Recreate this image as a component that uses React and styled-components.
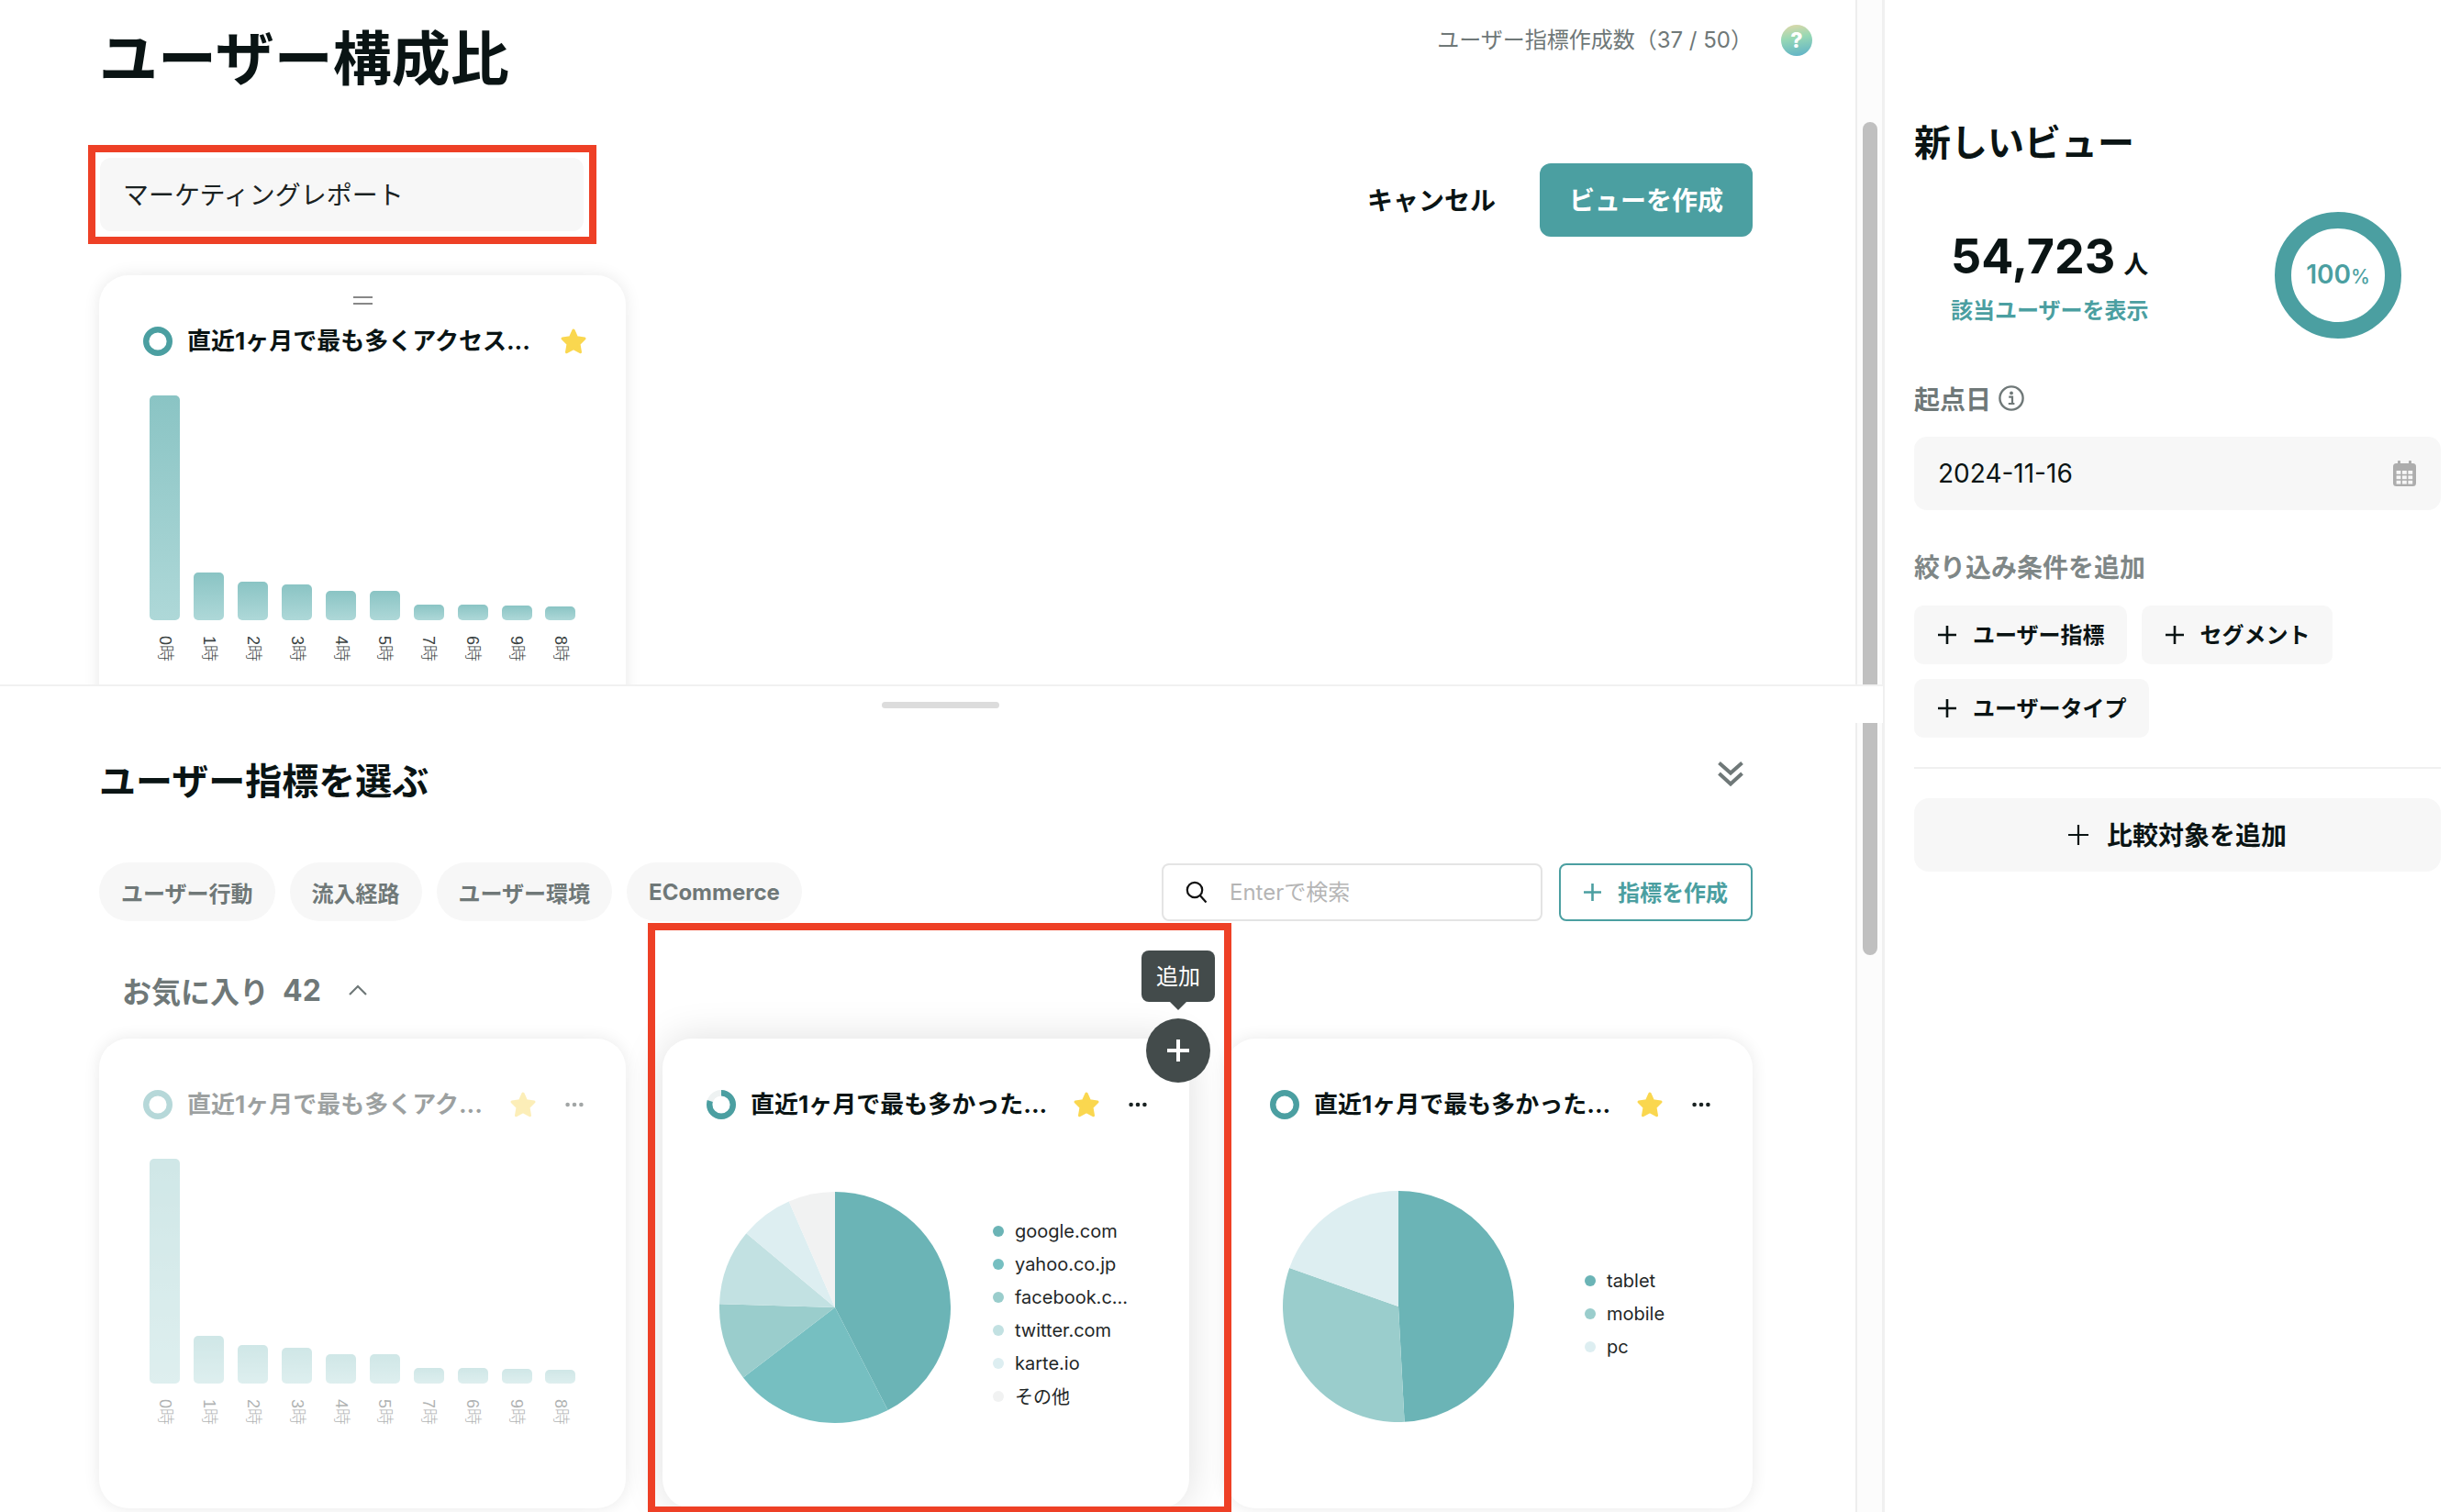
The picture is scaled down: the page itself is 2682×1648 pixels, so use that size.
import React from "react";
import styled, { createGlobalStyle } from "styled-components";

const TEAL = "#4b9fa1";
const INK = "#0a1414";
const GREY = "#6f7878";

const Global = createGlobalStyle`
  html, body { margin: 0; padding: 0; background: #fff; }
  * { box-sizing: border-box; }
  body { font-family: "Inter", "Noto Sans CJK JP", sans-serif; color: ${INK}; }
`;

const Page = styled.div`
  display: flex;
  width: 2682px;
  height: 1648px;
  overflow: hidden;
  background: #fff;
`;
const LeftColumn = styled.div`
  width: 2052px;
  flex: none;
  display: flex;
  flex-direction: column;
`;
const TopPane = styled.div`
  height: 748px;
  flex: none;
  display: flex;
  border-bottom: 2px solid #f1f1f1;
`;
const TopContent = styled.div`
  width: 2022px;
  flex: none;
  overflow: hidden;
  padding: 32px 112px 0 108px;
`;
const Rail = styled.div`
  width: 30px;
  flex: none;
  padding: ${(p) => p.$top}px 5px 0 6px;
  border-left: 2px solid #eeeeee;
  border-right: 1px solid #f0f0f0;
  background: #fcfcfc;
`;
const Thumb = styled.div`
  width: 16px;
  height: ${(p) => p.$h}px;
  background: #c0c0c0;
  border-radius: ${(p) => p.$radius};
`;
const HeaderRow = styled.div`
  display: flex;
  justify-content: space-between;
  align-items: flex-start;
  margin-right: -65px;
`;
const PageTitle = styled.h1`
  margin: 0;
  font-size: 64px;
  line-height: 64px;
  font-weight: 700;
`;
const Quota = styled.div`
  display: flex;
  align-items: center;
  gap: 31px;
  margin-top: -5px;
  font-size: 24px;
  line-height: 34px;
  color: ${GREY};
`;
const HelpBadge = styled.div`
  width: 34px;
  height: 34px;
  border-radius: 50%;
  display: flex;
  align-items: center;
  justify-content: center;
  background: linear-gradient(170deg, #e3d8a8 0%, #97d8b4 42%, #5cb0c9 100%);
  color: #fff;
  font-size: 23px;
  font-weight: 800;
`;
const FormRow = styled.div`
  display: flex;
  justify-content: space-between;
  align-items: flex-start;
  margin: 62px 0 0 -12px;
`;
const Highlight = styled.div`
  width: 554px;
  height: 108px;
  border: 8px solid #ee4026;
  padding: 6px 6px 6px 5px;
`;
const NameInput = styled.div`
  height: 80px;
  border-radius: 12px;
  background: #f7f7f7;
  padding: 0 0 3px 25px;
  display: flex;
  align-items: center;
  font-size: 28px;
  color: #1a2222;
`;
const FormActions = styled.div`
  display: flex;
  align-items: center;
  gap: 48px;
  margin-top: 20px;
`;
const CancelText = styled.div`
  font-size: 28px;
  font-weight: 700;
  padding-bottom: 3px;
`;
const PrimaryButton = styled.div`
  width: 232px;
  height: 80px;
  border-radius: 12px;
  background: ${TEAL};
  color: #fff;
  font-size: 28px;
  font-weight: 700;
  padding-bottom: 3px;
  display: flex;
  align-items: center;
  justify-content: center;
`;
const TopCardSlot = styled.div`
  margin-top: 34px;
`;

const BottomPane = styled.div`
  flex: 1;
  min-height: 0;
  display: flex;
  flex-direction: column;
`;
const HandleBand = styled.div`
  height: 40px;
  flex: none;
  padding-right: 3px;
  display: flex;
  align-items: center;
  justify-content: center;
`;
const PaneHandle = styled.div`
  width: 128px;
  height: 7px;
  border-radius: 4px;
  background: #dcdcdc;
`;
const BottomBody = styled.div`
  flex: 1;
  min-height: 0;
  display: flex;
`;
const BottomContent = styled.div`
  width: 2022px;
  flex: none;
  padding: 40px 112px 0 108px;
`;
const SectionHead = styled.div`
  height: 48px;
  display: flex;
  align-items: center;
  justify-content: space-between;
`;
const SectionTitle = styled.h2`
  margin: 0;
  font-size: 40px;
  line-height: 48px;
  font-weight: 700;
`;
const CollapseSlot = styled.span`
  display: flex;
  margin: 0 10px 17px 0;
`;
const Toolbar = styled.div`
  display: flex;
  align-items: center;
  margin-top: 64px;
  height: 64px;
`;
const Tabs = styled.div`
  display: flex;
  gap: 16px;
  flex: 1;
`;
const Tab = styled.div`
  height: 64px;
  padding: 0 24px;
  border-radius: 32px;
  background: #f7f7f7;
  color: ${GREY};
  font-size: 24px;
  font-weight: 700;
  display: flex;
  align-items: center;
`;
const SearchBox = styled.div`
  width: 415px;
  height: 63px;
  border: 2px solid #e4e4e4;
  border-radius: 8px;
  display: flex;
  align-items: center;
  gap: 24px;
  padding: 0 0 0 24px;
  font-size: 24px;
  color: #b5b5b5;
`;
const Placeholder = styled.span`
  padding-bottom: 3px;
`;
const OutlineButton = styled.div`
  width: 211px;
  height: 63px;
  margin-left: 18px;
  border: 2px solid ${TEAL};
  border-radius: 8px;
  color: ${TEAL};
  font-size: 24px;
  font-weight: 700;
  display: flex;
  align-items: center;
  justify-content: center;
  gap: 18px;
`;
const OutlineLabel = styled.span`
  padding-bottom: 2px;
`;
const FavRow = styled.div`
  height: 40px;
  margin-top: 56px;
  padding: 0 0 2px 25px;
  display: flex;
  align-items: center;
  color: ${GREY};
  font-size: 32px;
  font-weight: 700;
`;
const FavCount = styled.span`
  margin-left: 15px;
`;
const FavChevron = styled.span`
  margin-left: 30px;
  display: flex;
`;
const CardGrid = styled.div`
  position: relative;
  display: grid;
  grid-template-columns: repeat(3, 574px);
  gap: 40px;
  margin-top: 32px;
`;
const Card = styled.div`
  position: relative;
  display: flow-root;
  width: 574px;
  height: 512px;
  border-radius: 32px;
  background: #fff;
  box-shadow: ${(p) =>
    p.$lifted ? "0 0 44px rgba(0, 0, 0, 0.13)" : "0 0 18px rgba(0, 0, 0, 0.09)"};
`;
const CardBody = styled.div`
  opacity: ${(p) => (p.$faded ? 0.4 : 1)};
`;
const DragHandle = styled.div`
  width: 21px;
  height: 9px;
  margin: 23px auto 24px;
  border-top: 2px solid #888;
  border-bottom: 2px solid #888;
`;
const CardHeader = styled.div`
  height: 32px;
  display: flex;
  align-items: center;
  padding: 0 ${(p) => (p.$pinned ? 42 : 46)}px 0 48px;
  margin-top: ${(p) => (p.$pinned ? 0 : 56)}px;
`;
const CardTitle = styled.div`
  flex: 1;
  min-width: 0;
  margin-left: 16px;
  font-size: 26px;
  font-weight: 700;
  line-height: 32px;
  white-space: nowrap;
`;
const StarSlot = styled.span`
  display: flex;
  flex: none;
  margin-left: 15px;
`;
const MoreSlot = styled.span`
  display: flex;
  flex: none;
  margin-left: 31px;
`;
const BarChart = styled.div`
  display: grid;
  grid-template-columns: repeat(10, 47.9px);
  margin: 0 0 0 48px;
  height: 288px;
  align-items: end;
  justify-items: center;
`;
const Bar = styled.div`
  width: 33px;
  border-radius: 5px;
  background: linear-gradient(#8ac4c4, #aed8d8);
`;
const BarLabels = styled.div`
  display: grid;
  grid-template-columns: repeat(10, 47.9px);
  margin: 17px 0 0 48px;
  justify-items: center;
`;
const BarLabel = styled.div`
  transform: rotate(90deg);
  width: 18px;
  height: 28px;
  display: flex;
  align-items: center;
  justify-content: center;
  white-space: nowrap;
  font-family: "Liberation Sans", "Noto Sans CJK JP", sans-serif;
  font-weight: 300;
  font-size: 18px;
  line-height: 18px;
  color: #3a4242;
`;
const PieRow = styled.div`
  display: flex;
  align-items: center;
  margin-top: ${(p) => p.$top}px;
  padding-left: 62px;
`;
const Legend = styled.div`
  display: flex;
  flex-direction: column;
  margin: ${(p) => p.$shift}px 0 0 ${(p) => p.$gap}px;
`;
const LegendItem = styled.div`
  height: 36px;
  display: flex;
  align-items: center;
  gap: 12px;
  font-size: 20px;
  color: #1f2727;
  white-space: nowrap;
`;
const LegendDot = styled.span`
  width: 12px;
  height: 12px;
  border-radius: 50%;
  background: ${(p) => p.$c};
`;
const Tooltip = styled.div`
  position: absolute;
  left: 522px;
  top: -96px;
  width: 80px;
  height: 56px;
  padding-bottom: 4px;
  border-radius: 8px;
  background: #434b4b;
  color: #fff;
  font-size: 24px;
  display: flex;
  align-items: center;
  justify-content: center;
  z-index: 3;
  &::after {
    content: "";
    position: absolute;
    left: 31px;
    bottom: -9px;
    border-left: 9px solid transparent;
    border-right: 9px solid transparent;
    border-top: 9px solid #434b4b;
  }
`;
const AddCircle = styled.div`
  position: absolute;
  left: 527px;
  top: -22px;
  width: 70px;
  height: 70px;
  border-radius: 50%;
  background: #434b4b;
  display: flex;
  align-items: center;
  justify-content: center;
  z-index: 3;
`;
const CardFrame = styled.div`
  position: absolute;
  left: 598px;
  top: -126px;
  width: 636px;
  height: 644px;
  border: 8px solid #ee4026;
  z-index: 2;
  pointer-events: none;
`;

const Sidebar = styled.aside`
  flex: 1;
  border-left: 2px solid #f0f0f0;
  padding: 132px 22px 0 32px;
`;
const SideTitle = styled.h2`
  margin: 0;
  font-size: 40px;
  line-height: 48px;
  font-weight: 700;
`;
const StatsRow = styled.div`
  display: flex;
  justify-content: space-between;
  margin-top: 51px;
  padding: 0 43px 0 40px;
`;
const StatsText = styled.div`
  padding-top: 19px;
`;
const CountLine = styled.div`
  height: 60px;
  display: flex;
  align-items: baseline;
  gap: 9px;
`;
const CountValue = styled.span`
  font-size: 52px;
  line-height: 60px;
  font-weight: 700;
`;
const CountUnit = styled.span`
  font-size: 27px;
  font-weight: 700;
`;
const UsersLink = styled.div`
  margin-top: 13px;
  font-size: 24px;
  line-height: 32px;
  font-weight: 700;
  color: ${TEAL};
`;
const Donut = styled.div`
  width: 138px;
  height: 138px;
  border: 18px solid ${TEAL};
  border-radius: 50%;
  display: flex;
  align-items: baseline;
  justify-content: center;
  padding-top: 33px;
  color: ${TEAL};
  font-size: 28px;
  font-weight: 600;
`;
const DonutUnit = styled.span`
  font-size: 21px;
  font-weight: 500;
`;
const FieldLabel = styled.div`
  height: 40px;
  margin-top: ${(p) => p.$top}px;
  padding-bottom: 3px;
  display: flex;
  align-items: center;
  gap: 8px;
  font-size: 28px;
  font-weight: 700;
  color: ${(p) => p.$c};
`;
const DateField = styled.div`
  height: 80px;
  margin-top: 21px;
  border-radius: 14px;
  background: #f7f7f7;
  padding: 0 27px 0 26px;
  display: flex;
  align-items: center;
  justify-content: space-between;
  font-size: 28px;
`;
const ChipWrap = styled.div`
  display: flex;
  flex-wrap: wrap;
  gap: 16px;
  margin-top: 22px;
`;
const Chip = styled.div`
  height: 64px;
  padding: 0 24px 0 26px;
  border-radius: 10px;
  background: #f7f7f7;
  font-size: 24px;
  font-weight: 700;
  display: flex;
  align-items: center;
  gap: 18px;
`;
const ChipLabel = styled.span`
  padding-bottom: 3px;
`;
const SideDivider = styled.div`
  height: 2px;
  margin-top: 32px;
  background: #f0f0f0;
`;
const CompareButton = styled.div`
  height: 80px;
  margin-top: 32px;
  border-radius: 16px;
  background: #f7f7f7;
  font-size: 28px;
  font-weight: 700;
  display: flex;
  align-items: center;
  justify-content: center;
  gap: 20px;
`;

const Plus = ({ size = 20, stroke = 2.6, color = INK }) => (
  <svg width={size} height={size} viewBox="0 0 20 20" fill="none">
    <path d="M10 0V20M0 10H20" stroke={color} strokeWidth={(stroke * 20) / size} />
  </svg>
);
const Star = () => (
  <svg width="30" height="30" viewBox="0 0 30 30">
    <path
      d="M15 3 18.6 10.8 27 12 21 18 22.5 26.8 15 22.6 7.5 26.8 9 18 3 12 11.4 10.8Z"
      fill="#fad74f"
      stroke="#fad74f"
      strokeWidth="3"
      strokeLinejoin="round"
    />
  </svg>
);
const MoreDots = () => (
  <svg width="20" height="6" viewBox="0 0 20 6" fill="#1a2222">
    <circle cx="2.6" cy="3" r="2.3" />
    <circle cx="10" cy="3" r="2.3" />
    <circle cx="17.4" cy="3" r="2.3" />
  </svg>
);
const Ring = ({ partial }) => (
  <svg width="32" height="32" viewBox="0 0 32 32" fill="none" style={{ flex: "none" }}>
    <circle cx="16" cy="16" r="12.8" stroke={partial ? "#eef2f2" : TEAL} strokeWidth="6.4" />
    {partial && (
      <circle
        cx="16"
        cy="16"
        r="12.8"
        stroke={TEAL}
        strokeWidth="6.4"
        pathLength="100"
        strokeDasharray="80 20"
        transform="rotate(-90 16 16)"
      />
    )}
  </svg>
);
const ChevronsDown = () => (
  <svg width="28" height="27" viewBox="0 0 28 27" fill="none" stroke={GREY} strokeWidth="4">
    <path d="M1.5 1.5 14 12.5 26.5 1.5" />
    <path d="M1.5 13 14 24.5 26.5 13" />
  </svg>
);
const ChevronUp = () => (
  <svg width="20" height="12" viewBox="0 0 20 12" fill="none" stroke={GREY} strokeWidth="2.2">
    <path d="M1 11 10 2 19 11" />
  </svg>
);
const SearchIcon = () => (
  <svg width="24" height="24" viewBox="0 0 24 24" fill="none" stroke="#111" strokeWidth="2.2" style={{ flex: "none" }}>
    <circle cx="10" cy="10" r="8.2" />
    <path d="M15.8 16 22.5 23.5" />
  </svg>
);
const InfoIcon = () => (
  <svg width="28" height="28" viewBox="0 0 28 28" fill="none">
    <circle cx="14" cy="14" r="12.6" stroke={GREY} strokeWidth="2.4" />
    <circle cx="14" cy="8.4" r="1.9" fill={GREY} />
    <path d="M11.2 12.6H15V19.6M10.8 20H17.4" stroke={GREY} strokeWidth="2.2" />
  </svg>
);
const CalendarIcon = () => {
  const cells = [];
  for (let r = 0; r < 3; r++) {
    for (let c = 0; c < 3; c++) {
      cells.push(<rect key={`${r}-${c}`} x={3.6 + c * 6.4} y={11 + r * 5.4} width="4.8" height="3.8" fill="#f7f7f7" />);
    }
  }
  return (
    <svg width="25" height="28" viewBox="0 0 25 28">
      <rect y="3" width="25" height="25" rx="3.5" fill="#adadad" />
      <rect x="5" width="3" height="6" rx="1" fill="#adadad" />
      <rect x="17" width="3" height="6" rx="1" fill="#adadad" />
      {cells}
    </svg>
  );
};
const Pie = ({ slices }) => {
  const R = 126;
  const pt = (a) => {
    const t = ((a - 90) * Math.PI) / 180;
    return `${R + R * Math.cos(t)} ${R + R * Math.sin(t)}`;
  };
  let from = 0;
  return (
    <svg width="252" height="252" viewBox="0 0 252 252" style={{ flex: "none" }}>
      {slices.map(([to, color]) => {
        const d = `M${R} ${R}L${pt(from)}A${R} ${R} 0 ${to - from > 180 ? 1 : 0} 1 ${pt(to)}Z`;
        from = to;
        return <path key={to} d={d} fill={color} />;
      })}
    </svg>
  );
};

const hours = [
  ["0時", 245],
  ["1時", 52],
  ["2時", 42],
  ["3時", 39],
  ["4時", 32],
  ["5時", 32],
  ["7時", 17],
  ["6時", 17],
  ["9時", 16],
  ["8時", 15],
];

const HourChart = () => (
  <>
    <BarChart>
      {hours.map(([label, h]) => (
        <Bar key={label} style={{ height: h }} />
      ))}
    </BarChart>
    <BarLabels>
      {hours.map(([label]) => (
        <BarLabel key={label}>{label}</BarLabel>
      ))}
    </BarLabels>
  </>
);

const refSlices = [
  [152.8, "#6bb4b6"],
  [232.6, "#76bfc1"],
  [271.7, "#9acdcc"],
  [309.9, "#c2e1e2"],
  [336.5, "#ddeef1"],
  [360, "#f1f2f2"],
];
const refLegend = [
  ["google.com", "#6bb4b6"],
  ["yahoo.co.jp", "#76bfc1"],
  ["facebook.c...", "#9acdcc"],
  ["twitter.com", "#c2e1e2"],
  ["karte.io", "#ddeef1"],
  ["その他", "#f1f2f2"],
];
const deviceSlices = [
  [177, "#6bb4b6"],
  [289.5, "#9acdcc"],
  [360, "#ddeef1"],
];
const deviceLegend = [
  ["tablet", "#6bb4b6"],
  ["mobile", "#9acdcc"],
  ["pc", "#ddeef1"],
];

const ChartLegend = ({ items, gap, shift }) => (
  <Legend $gap={gap} $shift={shift}>
    {items.map(([label, color]) => (
      <LegendItem key={label}>
        <LegendDot $c={color} />
        {label}
      </LegendItem>
    ))}
  </Legend>
);

export default function App() {
  return (
    <Page>
      <Global />
      <LeftColumn>
        <TopPane>
          <TopContent>
            <HeaderRow>
              <PageTitle>ユーザー構成比</PageTitle>
              <Quota>
                ユーザー指標作成数（37 / 50）
                <HelpBadge>?</HelpBadge>
              </Quota>
            </HeaderRow>
            <FormRow>
              <Highlight>
                <NameInput>マーケティングレポート</NameInput>
              </Highlight>
              <FormActions>
                <CancelText>キャンセル</CancelText>
                <PrimaryButton>ビューを作成</PrimaryButton>
              </FormActions>
            </FormRow>
            <TopCardSlot>
              <Card>
                <DragHandle />
                <CardHeader $pinned>
                  <Ring />
                  <CardTitle>直近1ヶ月で最も多くアクセス...</CardTitle>
                  <StarSlot>
                    <Star />
                  </StarSlot>
                </CardHeader>
                <HourChart />
              </Card>
            </TopCardSlot>
          </TopContent>
          <Rail $top={133}>
            <Thumb $h={613} $radius="8px 8px 0 0" />
          </Rail>
        </TopPane>
        <BottomPane>
          <HandleBand>
            <PaneHandle />
          </HandleBand>
          <BottomBody>
            <BottomContent>
              <SectionHead>
                <SectionTitle>ユーザー指標を選ぶ</SectionTitle>
                <CollapseSlot>
                  <ChevronsDown />
                </CollapseSlot>
              </SectionHead>
              <Toolbar>
                <Tabs>
                  <Tab>ユーザー行動</Tab>
                  <Tab>流入経路</Tab>
                  <Tab>ユーザー環境</Tab>
                  <Tab>ECommerce</Tab>
                </Tabs>
                <SearchBox>
                  <SearchIcon />
                  <Placeholder>Enterで検索</Placeholder>
                </SearchBox>
                <OutlineButton>
                  <Plus size={19} stroke={2.6} color={TEAL} />
                  <OutlineLabel>指標を作成</OutlineLabel>
                </OutlineButton>
              </Toolbar>
              <FavRow>
                お気に入り
                <FavCount>42</FavCount>
                <FavChevron>
                  <ChevronUp />
                </FavChevron>
              </FavRow>
              <CardGrid>
                <Card>
                  <CardBody $faded>
                    <CardHeader>
                      <Ring />
                      <CardTitle>直近1ヶ月で最も多くアク...</CardTitle>
                      <StarSlot>
                        <Star />
                      </StarSlot>
                      <MoreSlot>
                        <MoreDots />
                      </MoreSlot>
                    </CardHeader>
                    <HourChart />
                  </CardBody>
                </Card>
                <Card $lifted>
                  <Tooltip>追加</Tooltip>
                  <AddCircle>
                    <Plus size={24} stroke={4} color="#fff" />
                  </AddCircle>
                  <CardHeader>
                    <Ring partial />
                    <CardTitle>直近1ヶ月で最も多かった...</CardTitle>
                    <StarSlot>
                      <Star />
                    </StarSlot>
                    <MoreSlot>
                      <MoreDots />
                    </MoreSlot>
                  </CardHeader>
                  <PieRow $top={79}>
                    <Pie slices={refSlices} />
                    <ChartLegend items={refLegend} gap={46} shift={13} />
                  </PieRow>
                </Card>
                <Card>
                  <CardHeader>
                    <Ring />
                    <CardTitle>直近1ヶ月で最も多かった...</CardTitle>
                    <StarSlot>
                      <Star />
                    </StarSlot>
                    <MoreSlot>
                      <MoreDots />
                    </MoreSlot>
                  </CardHeader>
                  <PieRow $top={78}>
                    <Pie slices={deviceSlices} />
                    <ChartLegend items={deviceLegend} gap={77} shift={16} />
                  </PieRow>
                </Card>
                <CardFrame />
              </CardGrid>
            </BottomContent>
            <Rail $top={0}>
              <Thumb $h={253} $radius="0 0 8px 8px" />
            </Rail>
          </BottomBody>
        </BottomPane>
      </LeftColumn>
      <Sidebar>
        <SideTitle>新しいビュー</SideTitle>
        <StatsRow>
          <StatsText>
            <CountLine>
              <CountValue>54,723</CountValue>
              <CountUnit>人</CountUnit>
            </CountLine>
            <UsersLink>該当ユーザーを表示</UsersLink>
          </StatsText>
          <Donut>
            100<DonutUnit>%</DonutUnit>
          </Donut>
        </StatsRow>
        <FieldLabel $top={46} $c={GREY}>
          起点日
          <InfoIcon />
        </FieldLabel>
        <DateField>
          2024-11-16
          <CalendarIcon />
        </DateField>
        <FieldLabel $top={42} $c="#7f8787">
          絞り込み条件を追加
        </FieldLabel>
        <ChipWrap>
          <Chip>
            <Plus />
            <ChipLabel>ユーザー指標</ChipLabel>
          </Chip>
          <Chip>
            <Plus />
            <ChipLabel>セグメント</ChipLabel>
          </Chip>
          <Chip>
            <Plus />
            <ChipLabel>ユーザータイプ</ChipLabel>
          </Chip>
        </ChipWrap>
        <SideDivider />
        <CompareButton>
          <Plus size={22} stroke={2.2} />
          <ChipLabel>比較対象を追加</ChipLabel>
        </CompareButton>
      </Sidebar>
    </Page>
  );
}
